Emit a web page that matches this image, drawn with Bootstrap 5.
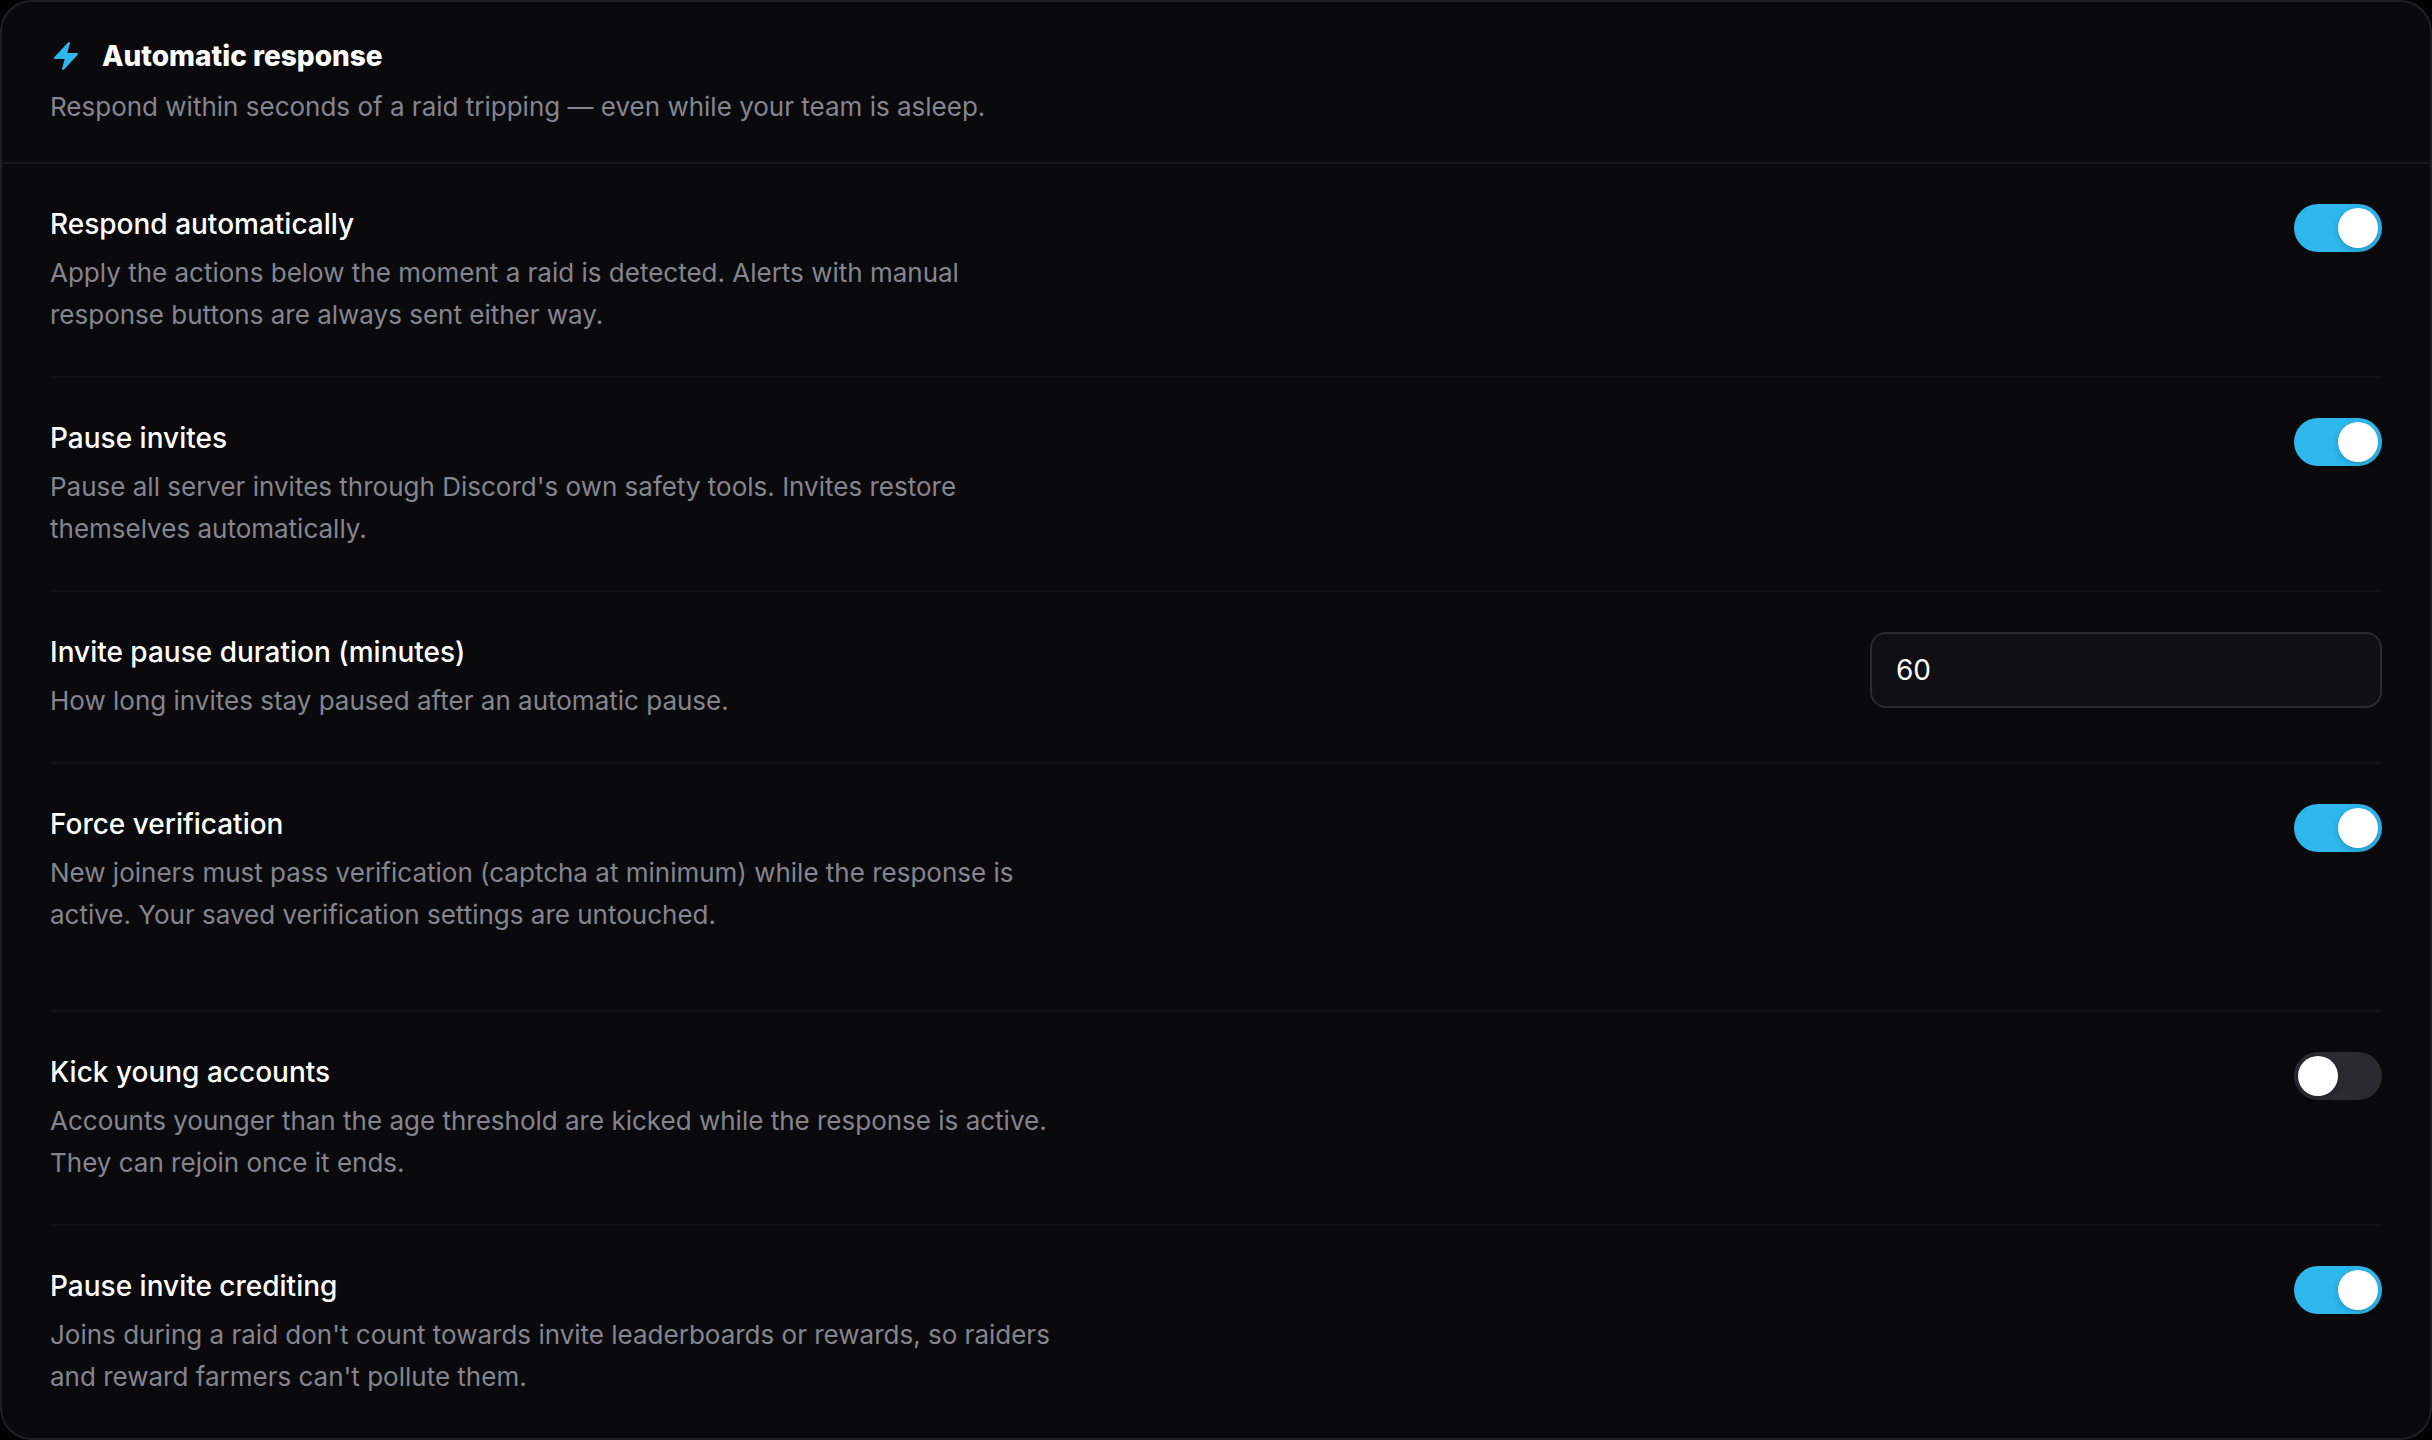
<!DOCTYPE html>
<html lang="en" data-bs-theme="dark">
<head>
<meta charset="utf-8">
<meta name="viewport" content="width=device-width, initial-scale=1">
<title>Automatic response</title>
<link href="https://cdn.jsdelivr.net/npm/bootstrap@5.3.0/dist/css/bootstrap.min.css" rel="stylesheet">
<style>
body{background:#000;color:#fff;font-family:Inter,"Liberation Sans",sans-serif;font-size:26px}
.panel{background:#0a0a0c;border:2px solid #1f1f25;border-radius:32px;min-height:100vh}
.panel-head{padding:32px 48px 34px;border-bottom:2px solid #17171a}
.title-line{gap:20px;margin-bottom:8px}
.panel-title{font-size:28px;font-weight:800;line-height:44px}
.bolt{width:32px;height:32px;color:#2db7ed}
.muted-text{color:#85858f;line-height:42px}
.settings{padding:0 48px}
.setting{padding:40px 0;gap:48px;border-bottom:2px solid #121215}
.setting:last-child{border-bottom:0}
.setting-roomy{padding-bottom:74px}
.setting-copy{max-width:1008px}
.setting-label{font-size:28px;font-weight:500;line-height:40px;margin-bottom:8px}
.form-switch.toggle{padding:0;margin:0;min-height:0}
.toggle .form-check-input{display:flex;float:none;width:88px;height:48px;margin:0;padding:4px;border:0;border-radius:24px;background-color:#2a2a31;background-image:none}
.toggle .form-check-input::before{content:"";width:40px;height:40px;border-radius:50%;background:#fff;box-shadow:0 2px 6px rgba(0,0,0,.2)}
.toggle .form-check-input:checked{background-color:#2db7ed;background-image:none;justify-content:flex-end}
.minutes.form-control{width:512px;height:76px;border:2px solid #2a2a31;border-radius:16px;background:#101014;color:#fff;font-size:28px;padding:0 24px}
</style>
</head>
<body>
<main class="panel">
  <header class="panel-head">
    <div class="title-line d-flex align-items-center">
      <svg class="bolt" viewBox="0 0 24 24" fill="currentColor" aria-hidden="true"><path d="M14.615 1.595a.75.75 0 0 1 .359.852L12.982 9.75h7.268a.75.75 0 0 1 .548 1.262l-10.5 11.25a.75.75 0 0 1-1.272-.71l1.992-7.302H3.75a.75.75 0 0 1-.548-1.262l10.5-11.25a.75.75 0 0 1 .913-.143Z"/></svg>
      <h1 class="panel-title mb-0">Automatic response</h1>
    </div>
    <p class="muted-text mb-0">Respond within seconds of a raid tripping — even while your team is asleep.</p>
  </header>
  <div class="settings">
    <div class="setting d-flex justify-content-between align-items-start">
      <div class="setting-copy">
        <label class="setting-label d-block" for="respond">Respond automatically</label>
        <p class="muted-text mb-0" id="respond-help">Apply the actions below the moment a raid is detected. Alerts with manual response buttons are always sent either way.</p>
      </div>
      <div class="form-check form-switch toggle flex-shrink-0"><input class="form-check-input" type="checkbox" role="switch" id="respond" aria-describedby="respond-help" checked></div>
    </div>
    <div class="setting d-flex justify-content-between align-items-start">
      <div class="setting-copy">
        <label class="setting-label d-block" for="pause">Pause invites</label>
        <p class="muted-text mb-0" id="pause-help">Pause all server invites through Discord's own safety tools. Invites restore themselves automatically.</p>
      </div>
      <div class="form-check form-switch toggle flex-shrink-0"><input class="form-check-input" type="checkbox" role="switch" id="pause" aria-describedby="pause-help" checked></div>
    </div>
    <div class="setting d-flex justify-content-between align-items-start">
      <div class="setting-copy">
        <label class="setting-label d-block" for="duration">Invite pause duration (minutes)</label>
        <p class="muted-text mb-0" id="duration-help">How long invites stay paused after an automatic pause.</p>
      </div>
      <input class="form-control minutes flex-shrink-0" type="number" id="duration" value="60" min="1" aria-describedby="duration-help">
    </div>
    <div class="setting setting-roomy d-flex justify-content-between align-items-start">
      <div class="setting-copy">
        <label class="setting-label d-block" for="verify">Force verification</label>
        <p class="muted-text mb-0" id="verify-help">New joiners must pass verification (captcha at minimum) while the response is active. Your saved verification settings are untouched.</p>
      </div>
      <div class="form-check form-switch toggle flex-shrink-0"><input class="form-check-input" type="checkbox" role="switch" id="verify" aria-describedby="verify-help" checked></div>
    </div>
    <div class="setting d-flex justify-content-between align-items-start">
      <div class="setting-copy">
        <label class="setting-label d-block" for="kick">Kick young accounts</label>
        <p class="muted-text mb-0" id="kick-help">Accounts younger than the age threshold are kicked while the response is active. They can rejoin once it ends.</p>
      </div>
      <div class="form-check form-switch toggle flex-shrink-0"><input class="form-check-input" type="checkbox" role="switch" id="kick" aria-describedby="kick-help"></div>
    </div>
    <div class="setting d-flex justify-content-between align-items-start">
      <div class="setting-copy">
        <label class="setting-label d-block" for="credit">Pause invite crediting</label>
        <p class="muted-text mb-0" id="credit-help">Joins during a raid don't count towards invite leaderboards or rewards, so raiders and reward farmers can't pollute them.</p>
      </div>
      <div class="form-check form-switch toggle flex-shrink-0"><input class="form-check-input" type="checkbox" role="switch" id="credit" aria-describedby="credit-help" checked></div>
    </div>
  </div>
</main>
<script src="https://cdn.jsdelivr.net/npm/bootstrap@5.3.0/dist/js/bootstrap.bundle.min.js"></script>
</body>
</html>
